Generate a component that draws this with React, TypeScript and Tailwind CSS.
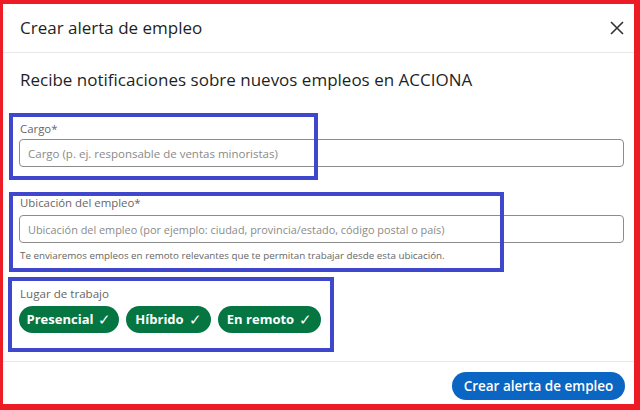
import React from "react";

const font = { fontFamily: '"Open Sans", "Noto Sans", sans-serif' };

function Pill({ label, w }: { label: string; w: string }) {
  return (
    <div
      className={`flex h-[27px] items-center justify-center rounded-full bg-[#057642] text-[13px] font-bold leading-[27px] text-white ${w}`}
    >
      <span>{label}</span>
      <span className="ml-[5px] text-[15px] font-normal">✓</span>
    </div>
  );
}

export default function App() {
  return (
    <div className="relative h-[410px] w-[640px] overflow-hidden" style={font}>
      <div className="flex h-full w-full flex-col border-b-[6px] border-l-[3px] border-r-[6px] border-t-[4px] border-[#ed1c24] bg-white">
        <div className="flex h-[49px] items-center justify-between border-b border-[#e8e8e8] pl-[17px] pr-[10px]">
          <div className="text-[17px] leading-[24px] text-[#1f1f1f]">Crear alerta de empleo</div>
          <svg width="16" height="16" viewBox="0 0 16 16" className="mr-[-1px]">
            <path d="M2 2 L14 14 M14 2 L2 14" stroke="#333" strokeWidth="1.6" />
          </svg>
        </div>
        <div className="flex flex-1 flex-col pl-[16px] pr-[10px]">
          <div className="mt-[14px] pl-[1px] text-[17px] leading-[26px] text-[#1f1f1f]">
            Recibe notificaciones sobre nuevos empleos en ACCIONA
          </div>
          <div className="mt-[28px] pl-[1px] text-[11.4px] leading-[16px] text-[#666]">Cargo*</div>
          <input
            className="mt-[2px] h-[28px] w-full rounded-[4px] border border-[#8c8c8c] px-[8px] text-[11.5px] text-[#333] placeholder:text-[#8a8a8a] outline-none"
            placeholder="Cargo (p. ej. responsable de ventas minoristas)"
          />
          <div className="mt-[28px] pl-[1px] text-[11.4px] leading-[16px] text-[#666]">Ubicación del empleo*</div>
          <input
            className="mt-[4px] h-[28px] w-full rounded-[4px] border border-[#8c8c8c] px-[8px] text-[10.9px] text-[#333] placeholder:text-[#8a8a8a] outline-none"
            placeholder="Ubicación del empleo (por ejemplo: ciudad, provincia/estado, código postal o país)"
          />
          <div className="mt-[6px] pl-[1px] text-[9.8px] leading-[14px] text-[#666]">
            Te enviaremos empleos en remoto relevantes que te permitan trabajar desde esta ubicación.
          </div>
          <div className="mt-[23px] pl-[1px] text-[11.6px] leading-[16px] text-[#666]">Lugar de trabajo</div>
          <div className="mt-[4px] flex gap-[7px] pl-[0px]">
            <Pill label="Presencial" w="w-[100px]" />
            <Pill label="Híbrido" w="w-[85px]" />
            <Pill label="En remoto" w="w-[103px]" />
          </div>
        </div>
        <div className="flex h-[43px] items-start justify-end border-t border-[#e8e8e8] pr-[9px] pt-[10px]">
          <button className="h-[28px] w-[173px] rounded-full bg-[#0a66c2] text-[13.5px] font-semibold text-white">
            Crear alerta de empleo
          </button>
        </div>
      </div>
      <div className="pointer-events-none absolute left-[9px] top-[113px] h-[67px] w-[309px] border-[4px] border-[#3f48cc]" />
      <div className="pointer-events-none absolute left-[9px] top-[192px] h-[80px] w-[495px] border-[4px] border-[#3f48cc]" />
      <div className="pointer-events-none absolute left-[8px] top-[277px] h-[75px] w-[326px] border-[4px] border-[#3f48cc]" />
    </div>
  );
}
